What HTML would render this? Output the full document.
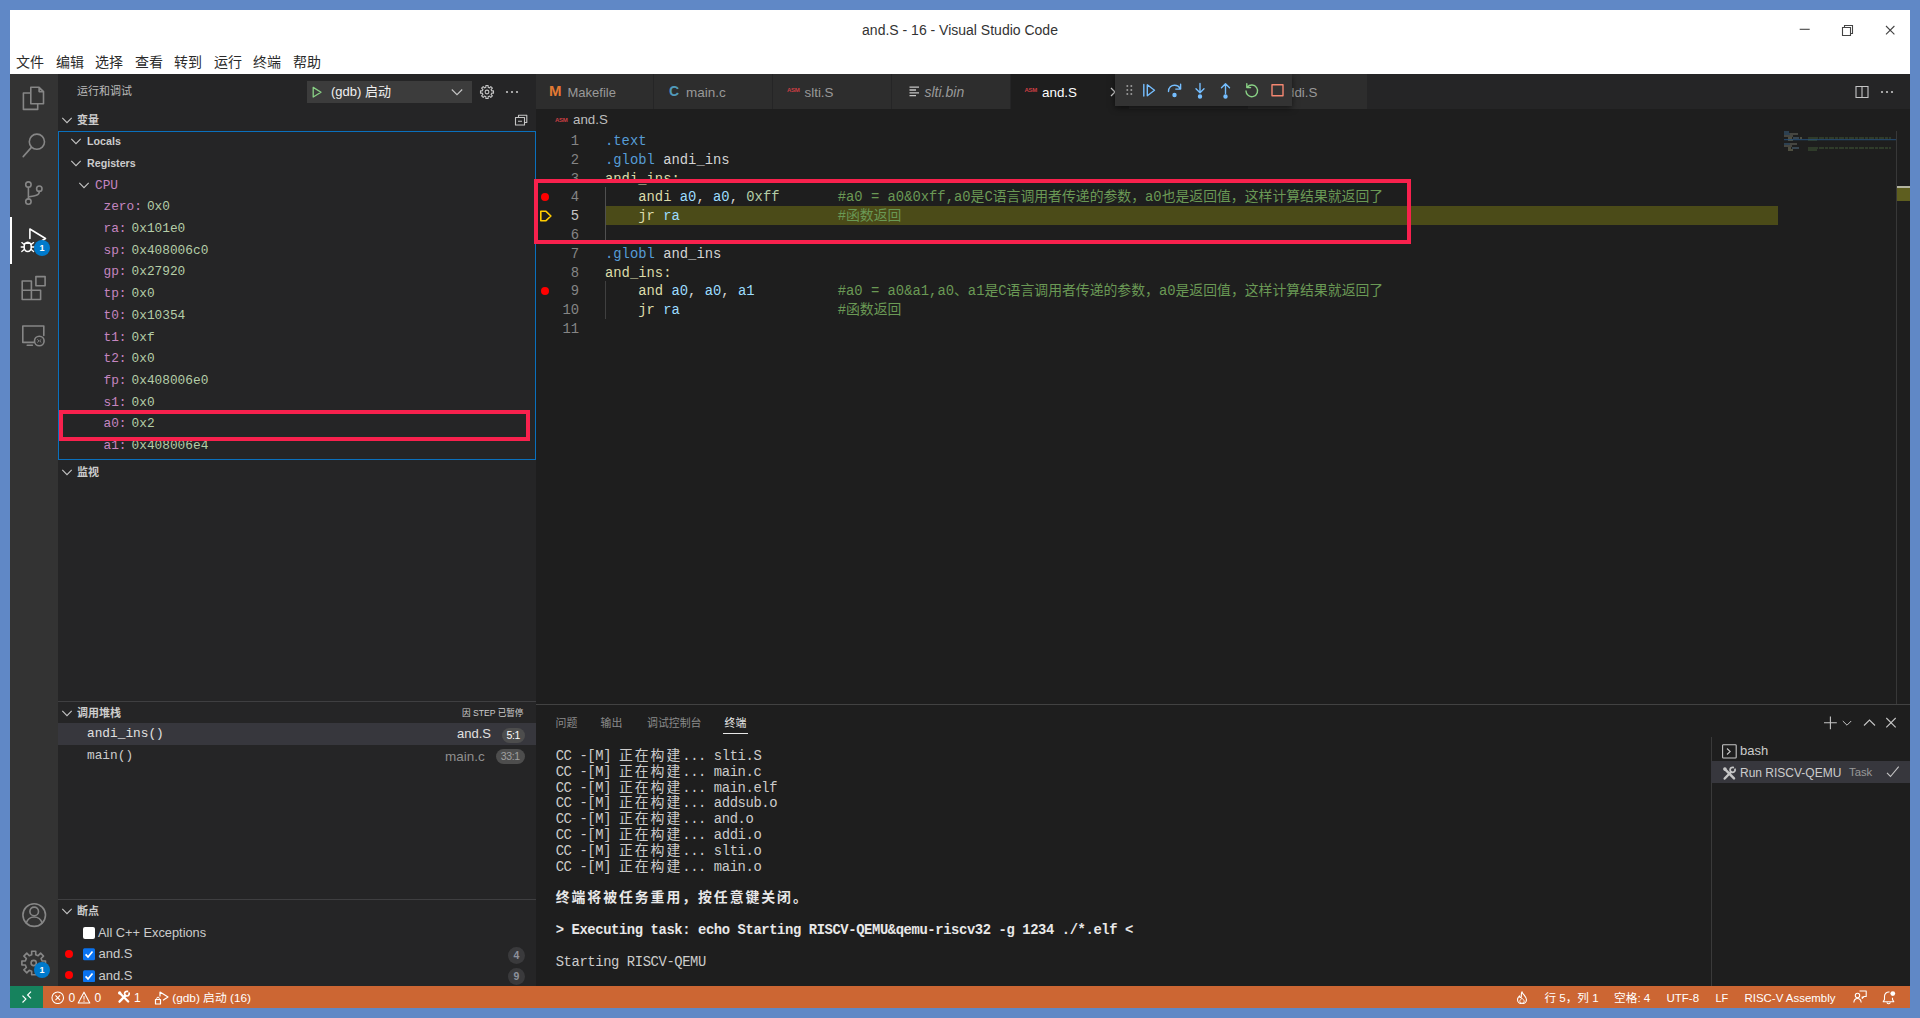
<!DOCTYPE html>
<html lang="zh-CN">
<head>
<meta charset="utf-8">
<title>and.S - 16 - Visual Studio Code</title>
<style>
*{box-sizing:border-box;margin:0;padding:0}
html,body{width:1920px;height:1018px;overflow:hidden;background:#6088c6}
body{position:relative;font-family:"Liberation Sans","Noto Sans CJK SC",sans-serif;font-size:13px;color:#ccc}
.abs{position:absolute}
.mono{font-family:"Liberation Mono","Noto Sans CJK SC",monospace}
#win{position:absolute;left:10px;top:10px;width:1900px;height:998px;background:#1e1e1e;overflow:hidden}
/* coordinates inside #win are target minus 10 */
#titlebar{position:absolute;left:0;top:0;width:1900px;height:64px;background:#fff;color:#333}
#title{position:absolute;left:0;width:1900px;top:10px;height:20px;line-height:20px;text-align:center;font-size:14px;color:#333}
#menu{position:absolute;left:0;top:41px;height:22px;line-height:22px;font-size:14px;color:#2b2b2b;white-space:nowrap}
#menu span{position:absolute;top:0}
#activity{position:absolute;left:0;top:64px;width:47.500px;height:912px;background:#333333}
#sidebar{position:absolute;left:48px;top:64px;width:478px;height:912px;background:#252526}
#editor{position:absolute;left:526px;top:64px;width:1374px;height:630px;background:#1e1e1e}
#panel{position:absolute;left:526px;top:694px;width:1374px;height:282px;background:#1e1e1e;border-top:1px solid #424242}
#status{position:absolute;left:0;top:976px;width:1900px;height:22px;background:#cc6633;color:#fff;font-size:12px;line-height:22px;white-space:nowrap}

/* activity bar */
#activity svg{position:absolute;left:12px;width:24px;height:24px;fill:none;stroke:#868686;stroke-width:1.6;stroke-linejoin:round;stroke-linecap:round}
#activity .badge{position:absolute;width:16px;height:16px;border-radius:8px;background:#007acc;color:#fff;font-size:9px;font-weight:bold;line-height:16px;text-align:center}
/* sidebar */
#sidebar .hdr{position:absolute;left:0;width:478px;height:22px;line-height:22px;font-size:11px;font-weight:bold;color:#ccc}
#sidebar .hdr .t{position:absolute;left:19px;top:0}
#sidebar svg.chev{position:absolute;width:16px;height:16px;fill:none;stroke:#c5c5c5;stroke-width:1.1}
.row{position:absolute;left:0;width:478px;height:22px;line-height:22px;white-space:pre;font-size:12.8px}
.row.mono{margin-top:1px}
.vn{color:#c586c0}.vv{color:#b5cea8}

.pill{height:15px;line-height:15px;border-radius:8px;background:#4d4d4d;color:#fff;font-size:10.500px;text-align:center;letter-spacing:-0.3px}
.dot{width:8.400px;height:8.400px;border-radius:50%;background:#f00}
.cnt{width:17px;height:17px;line-height:17px;border-radius:9px;background:#3a3a3c;color:#8e929c;font-size:10.500px;font-weight:bold;text-align:center}

.tab{position:absolute;top:0;height:35px;background:#2d2d2d}
.tab.on{background:#1e1e1e}
.tl{position:absolute;top:0.700px;height:35px;line-height:35px;font-size:13px;color:#999;white-space:nowrap}
.ti{position:absolute;top:0;height:35px;line-height:34px}
.asm{position:absolute;top:12px;font-size:6px;line-height:8px;font-weight:bold;color:#cc3e44;letter-spacing:-0.300px}
.ln,.cl{position:absolute;height:18.810px;line-height:18.810px;font-family:"Liberation Mono","Noto Sans CJK SC",monospace;font-size:13.850px;white-space:pre}
.ln,.cl{margin-top:1px}
.ln{left:0;width:43px;text-align:right;color:#858585}
.ln.act{color:#c6c6c6}
.cl{left:69px;color:#d4d4d4}
.k{color:#569cd6}.y{color:#dcdcaa}.r{color:#9cdcfe}.n{color:#b5cea8}.c{color:#6a9955}

.pt{position:absolute;top:7px;height:22px;line-height:22px;font-size:10.900px;color:#8b8b8b;white-space:nowrap}
.tl2{position:absolute;left:19.700px;height:16px;line-height:16px;font-family:"Liberation Mono","Noto Sans CJK SC",monospace;font-size:13.850px;letter-spacing:-0.400px;color:#ccc;white-space:pre}
.tl2.b{font-weight:bold;color:#e8e8e8}
.tl2 .cj{letter-spacing:1.970px}
.si{position:absolute;top:1px;height:22px;line-height:22px;font-size:12px;color:#fff;white-space:nowrap}
</style>
</head>
<body>
<div id="win">
  <div id="titlebar">
    <div id="title">and.S - 16 - Visual Studio Code</div>
    <div id="menu"><span style="left:6px">文件</span><span style="left:46px">编辑</span><span style="left:85px">选择</span><span style="left:125px">查看</span><span style="left:164px">转到</span><span style="left:204px">运行</span><span style="left:243px">终端</span><span style="left:283px">帮助</span></div>
    <svg class="abs" style="left:1780px;top:10px;width:110px;height:20px" viewBox="0 0 110 20" fill="none" stroke="#444" stroke-width="1.100">
      <path d="M9.700 9.300h10"/>
      <path d="M52.500 7.500h8v8h-8z M54.500 7.500v-2h8v8h-2"/>
      <path d="M96 6l8.400 8.400M104.400 6l-8.400 8.400"/>
    </svg>
  </div>
  <div id="activity">
    <svg style="left:0;top:0;width:48px;height:912px" viewBox="0 0 48 912">
      <!-- files -->
      <path d="M20.8 13.2h8.3l4.4 4.4v12.2H20.8z M29.1 13.2v4.4h4.4 M20.8 19h-7.4v16.4h14.3v-5.6"/>
      <!-- search -->
      <circle cx="26.9" cy="67.7" r="7.6"/><path d="M21.4 73.4L13.2 82.6"/>
      <!-- scm -->
      <circle cx="18.4" cy="110.6" r="2.7"/><circle cx="18.4" cy="127.6" r="2.7"/><circle cx="29.3" cy="114.7" r="2.7"/>
      <path d="M18.4 113.3V124.9 M29.3 117.4c0 4.2-4.6 4.6-10.9 5.4"/>
      <!-- debug (active) -->
      <g stroke="#fff">
        <path d="M19.9 164.5V155l15.6 9.5-3.2 2"/>
        <ellipse cx="17.7" cy="172.9" rx="3.6" ry="4.6" stroke-width="1.6"/>
        <path d="M14.6 169.4h6.2 M11.8 168.6l2.4 2 M23.6 168.6l-2.4 2 M11.2 173h2.8 M24.2 173h-2.8 M11.8 177.6l2.4-2 M23.6 177.6l-2.4-2" stroke-width="1.3"/>
      </g>
      <!-- extensions -->
      <path d="M12.2 207h9.2v18.5h-9.2z M12.2 216.2h18.4v9.3h-9.2 M30.6 216.2v9.3h-9.2 M25.9 202.6h9.2v9.2h-9.2z"/>
      <!-- remote explorer -->
      <path d="M24 268.4H12.8v-16.4h21v9.4 M17.2 271.2h5.2" /><circle cx="29.3" cy="267" r="4.8"/>
      <path d="M27.6 268.2l1.4-1.3-1.4-1.3 M31 265.6l-1.4 1.3 1.4 1.3" stroke-width="0.9"/>
      <!-- account -->
      <circle cx="24.2" cy="841.1" r="11.3"/><circle cx="24.2" cy="837.4" r="4.3"/><path d="M16.3 849c1.4-4.2 4.6-6 7.9-6s6.5 1.800 7.900 6"/>
      <!-- gear -->
      <path d="M21.69 880.64 L21.64 877.18 L25.76 877.18 L25.71 880.64 L28.19 881.67 L30.60 879.18 L33.52 882.10 L31.03 884.51 L32.06 886.99 L35.52 886.94 L35.52 891.06 L32.06 891.01 L31.03 893.49 L33.52 895.90 L30.60 898.82 L28.19 896.33 L25.71 897.36 L25.76 900.82 L21.64 900.82 L21.69 897.36 L19.21 896.33 L16.80 898.82 L13.88 895.90 L16.37 893.49 L15.34 891.01 L11.88 891.06 L11.88 886.94 L15.34 886.99 L16.37 884.51 L13.88 882.10 L16.80 879.18 L19.21 881.67Z"/>
      <circle cx="23.7" cy="889" r="2.6"/>
    </svg>
    <div class="abs" style="left:0;top:143px;width:2px;height:47px;background:#fff"></div>
    <div class="badge" style="left:24px;top:166px">1</div>
    <div class="badge" style="left:24px;top:888px">1</div>
  </div>
  <div class="abs" style="left:47.500px;top:64px;width:1px;height:912px;background:#252526"></div>
  <div id="sidebar">
    <div class="abs" style="left:19px;top:6px;height:22px;line-height:22px;font-size:11px;color:#bbb">运行和调试</div>
    <div class="abs" style="left:249px;top:7px;width:165px;height:22px;background:#3c3c3c"></div>
    <svg class="abs" style="left:252px;top:10px;width:16px;height:16px" viewBox="0 0 16 16" fill="none" stroke="#89d185" stroke-width="1.3" stroke-linejoin="round"><path d="M3.2 3.400v9.600l7.800-4.800z"/></svg>
    <div class="abs" style="left:273px;top:7px;height:22px;line-height:22px;font-size:13px;color:#f0f0f0">(gdb) 启动</div>
    <svg class="chev" style="left:391px;top:10px" viewBox="0 0 16 16"><path d="M2.800 5.500L8 10.700l5.200-5.200"/></svg>
    <svg class="abs" style="left:421px;top:10px;width:16px;height:16px" viewBox="0 0 16 16" fill="none" stroke="#c5c5c5" stroke-width="1.1" stroke-linejoin="round"><path d="M6.88 3.33 L6.87 1.50 L9.13 1.50 L9.12 3.33 L10.51 3.91 L11.80 2.60 L13.40 4.20 L12.09 5.49 L12.67 6.88 L14.50 6.87 L14.50 9.13 L12.67 9.12 L12.09 10.51 L13.40 11.80 L11.80 13.40 L10.51 12.09 L9.12 12.67 L9.13 14.50 L6.87 14.50 L6.88 12.67 L5.49 12.09 L4.20 13.40 L2.60 11.80 L3.91 10.51 L3.33 9.12 L1.50 9.13 L1.50 6.87 L3.33 6.88 L3.91 5.49 L2.60 4.20 L4.20 2.60 L5.49 3.910Z"/><circle cx="8" cy="8" r="1.900"/></svg>
    <svg class="abs" style="left:446px;top:10px;width:16px;height:16px" viewBox="0 0 16 16" fill="#c5c5c5"><circle cx="3" cy="8" r="1.100"/><circle cx="8" cy="8" r="1.100"/><circle cx="13" cy="8" r="1.100"/></svg>

    <div class="hdr" style="top:35px"><svg class="chev" style="left:1px;top:3px" viewBox="0 0 16 16"><path d="M3.3 5.9L8 10.6l4.700-4.700"/></svg><span class="t">变量</span></div>
    <svg class="abs" style="left:455px;top:38px;width:16px;height:16px" viewBox="0 0 16 16" fill="none" stroke="#c5c5c5" stroke-width="1.100" stroke-linejoin="round"><path d="M5.500 5.500V3.200h8.300v7.300h-2.300 M2.500 5.500h9v7.500h-9z M5 9.300h4"/></svg>
    <div class="abs" style="left:0;top:57px;width:478px;height:329px;border:1px solid #0a70bd"></div>
    <svg class="chev" style="left:10px;top:59.19999999999999px" viewBox="0 0 16 16"><path d="M3.3 5.9L8 10.6l4.700-4.700"/></svg><div class="row" style="top:56.2px;left:29px;font-weight:bold;font-size:10.7px;color:#ccc">Locals</div><svg class="chev" style="left:10px;top:80.9px" viewBox="0 0 16 16"><path d="M3.3 5.9L8 10.6l4.700-4.700"/></svg><div class="row" style="top:77.9px;left:29px;font-weight:bold;font-size:10.7px;color:#ccc">Registers</div><svg class="chev" style="left:18px;top:102.6px" viewBox="0 0 16 16"><path d="M3.3 5.9L8 10.6l4.700-4.700"/></svg><div class="row mono" style="top:99.6px;left:37px;color:#c586c0">CPU</div><div class="row mono" style="top:121.3px;left:45.5px"><span class="vn">zero:</span><span class="vv" style="margin-left:5px">0x0</span></div><div class="row mono" style="top:143.0px;left:45.5px"><span class="vn">ra:</span><span class="vv" style="margin-left:5px">0x101e0</span></div><div class="row mono" style="top:164.7px;left:45.5px"><span class="vn">sp:</span><span class="vv" style="margin-left:5px">0x408006c0</span></div><div class="row mono" style="top:186.4px;left:45.5px"><span class="vn">gp:</span><span class="vv" style="margin-left:5px">0x27920</span></div><div class="row mono" style="top:208.1px;left:45.5px"><span class="vn">tp:</span><span class="vv" style="margin-left:5px">0x0</span></div><div class="row mono" style="top:229.8px;left:45.5px"><span class="vn">t0:</span><span class="vv" style="margin-left:5px">0x10354</span></div><div class="row mono" style="top:251.5px;left:45.5px"><span class="vn">t1:</span><span class="vv" style="margin-left:5px">0xf</span></div><div class="row mono" style="top:273.2px;left:45.5px"><span class="vn">t2:</span><span class="vv" style="margin-left:5px">0x0</span></div><div class="row mono" style="top:294.9px;left:45.5px"><span class="vn">fp:</span><span class="vv" style="margin-left:5px">0x408006e0</span></div><div class="row mono" style="top:316.6px;left:45.5px"><span class="vn">s1:</span><span class="vv" style="margin-left:5px">0x0</span></div><div class="row mono" style="top:338.3px;left:45.5px"><span class="vn">a0:</span><span class="vv" style="margin-left:5px">0x2</span></div><div class="row mono" style="top:360.0px;left:45.5px"><span class="vn">a1:</span><span class="vv" style="margin-left:5px">0x408006e4</span></div>
    <div class="abs" style="left:0.500px;top:336px;width:471.500px;height:31px;border:4.300px solid #f8214d"></div>

    <div class="hdr" style="top:386.500px"><svg class="chev" style="left:1px;top:3px" viewBox="0 0 16 16"><path d="M3.3 5.9L8 10.6l4.700-4.700"/></svg><span class="t">监视</span></div>

    <div class="abs" style="left:0;top:627px;width:478px;height:1px;background:#3f3f41"></div>
    <div class="hdr" style="top:628px"><svg class="chev" style="left:1px;top:3px" viewBox="0 0 16 16"><path d="M3.3 5.9L8 10.6l4.700-4.700"/></svg><span class="t">调用堆栈</span></div>
    <div class="abs" style="left:404px;top:628px;height:22px;line-height:22px;font-size:8.600px;color:#ccc;white-space:nowrap">因 STEP 已暂停</div>
    <div class="abs" style="left:0;top:649px;width:478px;height:22px;background:#37373d"></div>
    <div class="row mono" style="top:648px;left:29px;color:#e0e0e0">andi_ins()</div>
    <div class="row" style="top:649px;left:399px;color:#e0e0e0;font-size:13px;width:auto">and.S</div>
    <div class="abs pill" style="left:444px;top:653.500px;width:22.500px">5:1</div>
    <div class="row mono" style="top:670px;left:29px;color:#ccc">main()</div>
    <div class="row" style="top:671.500px;left:387px;color:#8f8f8f;font-size:13.500px;width:auto">main.c</div>
    <div class="abs pill" style="left:438px;top:675px;width:28.500px;color:#a0a0a0">33:1</div>

    <div class="abs" style="left:0;top:825px;width:478px;height:1px;background:#3f3f41"></div>
    <div class="hdr" style="top:826px"><svg class="chev" style="left:1px;top:3px" viewBox="0 0 16 16"><path d="M3.3 5.9L8 10.6l4.700-4.700"/></svg><span class="t">断点</span></div>
    <div class="abs" style="left:24.500px;top:852.500px;width:12px;height:12px;background:#fff;border-radius:2px"></div>
    <div class="row" style="top:847.500px;left:40px;color:#ccc;font-size:12.800px;width:auto">All C++ Exceptions</div>
    <div class="abs dot" style="left:7px;top:875.500px"></div>
    <svg class="abs" style="left:24.500px;top:874px;width:12px;height:12.500px" viewBox="0 0 12 12"><rect width="12" height="12" rx="1.500" fill="#0a73f0"/><path d="M2.600 6.200l2.400 2.500 4.500-5.500" fill="none" stroke="#fff" stroke-width="1.700"/></svg>
    <div class="row" style="top:869px;left:40.500px;color:#ccc;font-size:13px;width:auto">and.S</div>
    <div class="abs cnt" style="left:450px;top:872.700px">4</div>
    <div class="abs dot" style="left:7px;top:897px"></div>
    <svg class="abs" style="left:24.500px;top:895.500px;width:12px;height:12.500px" viewBox="0 0 12 12"><rect width="12" height="12" rx="1.500" fill="#0a73f0"/><path d="M2.600 6.200l2.400 2.500 4.500-5.500" fill="none" stroke="#fff" stroke-width="1.700"/></svg>
    <div class="row" style="top:890.500px;left:40.500px;color:#ccc;font-size:13px;width:auto">and.S</div>
    <div class="abs cnt" style="left:450px;top:894.200px">9</div>
  </div>
  <div id="editor">
    <div class="abs" style="left:0;top:0;width:1374px;height:35px;background:#252526"></div>
    <div class="tab" style="left:0;width:116.500px"><span class="ti" style="left:13px;color:#e37933;font-weight:bold;font-size:15px">M</span><span class="tl" style="left:31.500px">Makefile</span></div>
    <div class="tab" style="left:117.500px;width:118px"><span class="ti" style="left:15.500px;color:#519aba;font-weight:bold;font-size:14px">C</span><span class="tl" style="left:32.500px;font-size:13.500px">main.c</span></div>
    <div class="tab" style="left:236.500px;width:118px"><span class="asm" style="left:14.500px">ASM</span><span class="tl" style="left:32px;font-size:13.400px">slti.S</span></div>
    <div class="tab" style="left:355.500px;width:118px"><svg class="abs" style="left:17px;top:12px;width:11px;height:11px" viewBox="0 0 11 11" stroke="#c5c5c5" stroke-width="1.300" fill="none"><path d="M0.500 1.200h9.500M0.500 4h6.500M0.500 6.800h9.500M0.500 9.600h6.500"/></svg><span class="tl" style="left:33px;font-style:italic;font-size:14px">slti.bin</span></div>
    <div class="tab on" style="left:474.500px;width:118px"><span class="asm" style="left:14px">ASM</span><span class="tl" style="left:31.500px;color:#fff;font-size:13.400px">and.S</span><svg class="abs" style="left:96px;top:10px;width:16px;height:16px" viewBox="0 0 16 16" stroke="#d0d0d0" stroke-width="1.200" fill="none"><path d="M4 4l8 8M12 4l-8 8"/></svg></div>
    <div class="tab" style="left:712px;width:118.500px"><span class="asm" style="left:14.500px">ASM</span><span class="tl" style="left:31.500px;font-size:13.400px">addi.S</span></div>
    <!-- editor actions -->
    <svg class="abs" style="left:1318px;top:9.500px;width:16px;height:16px" viewBox="0 0 16 16" stroke="#c5c5c5" stroke-width="1.100" fill="none"><path d="M2 2.500h12v11h-12zM8 2.500v11"/></svg>
    <svg class="abs" style="left:1343px;top:9.500px;width:16px;height:16px" viewBox="0 0 16 16" fill="#c5c5c5"><circle cx="3" cy="8" r="1.100"/><circle cx="8" cy="8" r="1.100"/><circle cx="13" cy="8" r="1.100"/></svg>
    <!-- breadcrumb -->
    <span class="asm" style="left:19px;top:41.500px">ASM</span>
    <div class="abs" style="left:37px;top:35px;height:22px;line-height:22px;font-size:13.300px;color:#bdbdbd">and.S</div>
    <!-- code -->
    <div class="abs" style="left:69.500px;top:132.24px;width:1172px;height:18.81px;background:#4b4b18"></div>
    <div class="abs" style="left:69px;top:113.43px;width:1px;height:56.42999999999999px;background:#505050"></div>
    <div class="abs" style="left:69px;top:207.48px;width:1px;height:37.62px;background:#404040"></div>
    <div class="ln" style="top:57.0px">1</div><div class="cl" style="top:57.0px"><span class="k">.text</span></div>
<div class="ln" style="top:75.81px">2</div><div class="cl" style="top:75.81px"><span class="k">.globl</span> andi_ins</div>
<div class="ln" style="top:94.62px">3</div><div class="cl" style="top:94.62px"><span class="y">andi_ins:</span></div>
<div class="ln" style="top:113.43px">4</div><div class="cl" style="top:113.43px">    <span class="y">andi</span> <span class="r">a0</span>, <span class="r">a0</span>, <span class="n">0xff</span>       <span class="c">#a0 = a0&amp;0xff,a0是C语言调用者传递的参数，a0也是返回值，这样计算结果就返回了</span></div>
<div class="ln act" style="top:132.24px">5</div><div class="cl" style="top:132.24px">    <span class="y">jr</span> <span class="r">ra</span>                   <span class="c">#函数返回</span></div>
<div class="ln" style="top:151.05px">6</div><div class="cl" style="top:151.05px"></div>
<div class="ln" style="top:169.86px">7</div><div class="cl" style="top:169.86px"><span class="k">.globl</span> and_ins</div>
<div class="ln" style="top:188.67px">8</div><div class="cl" style="top:188.67px"><span class="y">and_ins:</span></div>
<div class="ln" style="top:207.48px">9</div><div class="cl" style="top:207.48px">    <span class="y">and</span> <span class="r">a0</span>, <span class="r">a0</span>, <span class="r">a1</span>          <span class="c">#a0 = a0&amp;a1,a0、a1是C语言调用者传递的参数，a0是返回值，这样计算结果就返回了</span></div>
<div class="ln" style="top:226.29px">10</div><div class="cl" style="top:226.29px">    <span class="y">jr</span> <span class="r">ra</span>                   <span class="c">#函数返回</span></div>
<div class="ln" style="top:245.1px">11</div><div class="cl" style="top:245.1px"></div>

    <div class="abs dot" style="left:5.100px;top:118.5px"></div>
    <div class="abs dot" style="left:5.100px;top:212.55px"></div>
    <svg class="abs" style="left:2.500px;top:134px;width:16px;height:16px" viewBox="0 0 16 16" fill="none" stroke="#ffcc00" stroke-width="1.600" stroke-linejoin="round"><path d="M1.800 3.300h5.200l4.900 4.700-4.900 4.700h-5.200z"/></svg>
    <!-- annotation rect -->
    <div class="abs" style="left:-1.800px;top:104.800px;width:876.500px;height:65.200px;border:4.800px solid #f8214d"></div>
    <!-- minimap -->
    <svg class="abs" style="left:1242px;top:56px;width:118px;height:30px" viewBox="0 0 118 30">
      <g stroke-width="1" opacity="0.550">
      <path d="M6 2h5M6 4h6" stroke="#569cd6"/><path d="M12 4h8M6 6h9" stroke="#b0b0a0"/>
      <path d="M10 8h4M22 8h2" stroke="#cfcf9f"/><path d="M15 8h6" stroke="#7fb2d6"/><path d="M30 8h10" stroke="#5f8a4d"/><path d="M41 8h72" stroke="#5f8a4d" stroke-dasharray="5 1 3 1"/>
      <path d="M10 10h5" stroke="#cfcf9f"/><path d="M30 10h9" stroke="#5f8a4d"/>
      <path d="M6 14h6" stroke="#569cd6"/><path d="M12 14h7M6 16h8" stroke="#b0b0a0"/>
      <path d="M10 18h3" stroke="#cfcf9f"/><path d="M14 18h7" stroke="#7fb2d6"/><path d="M30 18h10" stroke="#5f8a4d"/><path d="M41 18h72" stroke="#5f8a4d" stroke-dasharray="5 1 3 1"/>
      <path d="M10 20h5" stroke="#cfcf9f"/><path d="M30 20h9" stroke="#5f8a4d"/>
      </g>
      <path d="M6 9.600h112" stroke="#264f78" stroke-width="1.400" opacity="0.800"/>
    </svg>
    <!-- overview ruler -->
    <div class="abs" style="left:1360px;top:57px;width:1px;height:573px;background:#383838"></div>
    <div class="abs" style="left:1361px;top:111.700px;width:13px;height:2.300px;background:#b4b4a0"></div>
    <div class="abs" style="left:1361px;top:114px;width:13px;height:12.800px;background:#5e5e1f"></div>
    <!-- debug toolbar -->
    <div class="abs" style="left:578.500px;top:0;width:177px;height:32px;background:#333333;box-shadow:0 2px 6px rgba(0,0,0,0.550);clip-path:inset(0 -10px -10px -10px)">
      <svg class="abs" style="left:0;top:0;width:177px;height:32px" viewBox="0 0 177 32" fill="none" stroke-width="1.400" stroke-linecap="round" stroke-linejoin="round">
        <g fill="#9a9a9a" stroke="none"><circle cx="12.300" cy="12" r="1"/><circle cx="16.300" cy="12" r="1"/><circle cx="12.300" cy="16" r="1"/><circle cx="16.300" cy="16" r="1"/><circle cx="12.300" cy="20" r="1"/><circle cx="16.300" cy="20" r="1"/></g>
        <g stroke="#75beff"><path d="M28.800 10.500v11.500M32.300 10.800v11l7.200-5.500z"/>
        <path d="M53.500 17.500c0-4 2.900-6.300 6-6.300 2.800 0 4.800 1.500 5.800 3.800M65.600 10.300v4.800h-4.800"/><circle cx="59.500" cy="21" r="1.500" fill="#75beff"/>
        <path d="M85 9.500v9M81 14.800l4 4 4-4"/><circle cx="85" cy="22.500" r="1.500" fill="#75beff"/>
        <path d="M110.500 19.500v-9.500M106.500 13.800l4-4 4 4"/><circle cx="110.500" cy="22.500" r="1.500" fill="#75beff"/></g>
        <g stroke="#89d185"><path d="M132.300 13.200a5.800 5.800 0 1 1-1.300 3.700M131.800 9.800v3.800h3.800"/></g>
        <rect x="157" y="10.800" width="11" height="11" stroke="#f48771"/>
      </svg>
    </div>
  </div>
  <div id="panel">
    <div class="pt" style="left:19.500px">问题</div>
    <div class="pt" style="left:64.500px">输出</div>
    <div class="pt" style="left:111px">调试控制台</div>
    <div class="pt" style="left:188.500px;color:#e7e7e7">终端</div>
    <div class="abs" style="left:186.500px;top:27.500px;width:25.500px;height:1px;background:#e7e7e7"></div>
    <div class="tl2" style="top:43.0px">CC -[M] <span class="cj">正在构建</span>... slti.S</div>
<div class="tl2" style="top:58.83px">CC -[M] <span class="cj">正在构建</span>... main.c</div>
<div class="tl2" style="top:74.66px">CC -[M] <span class="cj">正在构建</span>... main.elf</div>
<div class="tl2" style="top:90.49px">CC -[M] <span class="cj">正在构建</span>... addsub.o</div>
<div class="tl2" style="top:106.32px">CC -[M] <span class="cj">正在构建</span>... and.o</div>
<div class="tl2" style="top:122.15px">CC -[M] <span class="cj">正在构建</span>... addi.o</div>
<div class="tl2" style="top:137.98px">CC -[M] <span class="cj">正在构建</span>... slti.o</div>
<div class="tl2" style="top:153.81px">CC -[M] <span class="cj">正在构建</span>... main.o</div>
<div class="tl2 b" style="top:185.47px"><span class="cj">终端将被任务重用，按任意键关闭。</span></div>
<div class="tl2 b" style="top:217.13px">&gt; Executing task: echo Starting RISCV-QEMU&amp;qemu-riscv32 -g 1234 ./*.elf &lt;</div>
<div class="tl2" style="top:248.79px">Starting RISCV-QEMU</div>

    <svg class="abs" style="left:1282px;top:5px;width:90px;height:26px" viewBox="0 0 90 26" fill="none" stroke="#c5c5c5" stroke-width="1.100">
      <path d="M12.400 6.400v12.800M6 12.800h12.800"/>
      <path d="M24.800 11l4.200 4.200 4.200-4.200" stroke-width="1"/>
      <path d="M46 15.500l5.500-5.500 5.500 5.500"/>
      <path d="M68.300 8l9.400 9.400M77.700 8l-9.400 9.400"/>
    </svg>
    <div class="abs" style="left:1174.500px;top:32px;width:1px;height:250px;background:#3a3a3a"></div>
    <svg class="abs" style="left:1185.500px;top:38.500px;width:15px;height:15px" viewBox="0 0 15 15" fill="none" stroke="#c5c5c5" stroke-width="1.100"><rect x="0.600" y="0.800" width="13.600" height="13.200" rx="0.800"/><path d="M5 4.500l3.200 3-3.200 3"/></svg>
    <div class="abs" style="left:1204px;top:34.700px;height:22px;line-height:22px;font-size:13px;color:#ccc">bash</div>
    <div class="abs" style="left:1175px;top:56px;width:199px;height:22px;background:#37373d"></div>
    <svg class="abs" style="left:1185.500px;top:61px;width:15px;height:15px" viewBox="0 0 15 15" fill="none" stroke="#c5c5c5" stroke-linecap="round"><path d="M2.900 3.200L12 12.300M2.700 12.500L9 6" stroke-width="2.500"/><circle cx="2.900" cy="3.100" r="1" stroke-width="1.600"/><path d="M13.010 3.250A2.500 2.500 0 1 1 11.250 1.490" stroke-width="1.800"/></svg>
    <div class="abs" style="left:1204px;top:56.500px;height:22px;line-height:22px;font-size:12px;color:#ccc;white-space:nowrap">Run RISCV-QEMU</div>
    <div class="abs" style="left:1313px;top:56px;height:22px;line-height:22px;font-size:11.300px;color:#999">Task</div>
    <svg class="abs" style="left:1349px;top:59px;width:16px;height:16px" viewBox="0 0 16 16" fill="none" stroke="#c5c5c5" stroke-width="1.100"><path d="M2 8.800l3.500 3.700 8.200-9.800"/></svg>
  </div>
  <div id="status">
    <div class="abs" style="left:0;top:0;width:33px;height:22px;background:#16825d"></div>
    <svg class="abs" style="left:9px;top:3px;width:16px;height:16px" viewBox="0 0 16 16" fill="none" stroke="#fff" stroke-width="1.200"><path d="M3.500 6.700l3.400 3.400-3.400 3.400M12 2.600l-3.400 3.400 3.400 3.400"/></svg>
    <svg class="abs" style="left:41px;top:4.500px;width:13.500px;height:13.500px" viewBox="0 0 14 14" fill="none" stroke="#fff" stroke-width="1.100"><circle cx="7" cy="7" r="6"/><path d="M4.600 4.600l4.800 4.800M9.400 4.600l-4.800 4.800"/></svg>
    <span class="si" style="left:58.500px">0</span>
    <svg class="abs" style="left:67px;top:4.500px;width:14px;height:13px" viewBox="0 0 14 13" fill="none" stroke="#fff" stroke-width="1.100" stroke-linejoin="round"><path d="M7 1.200l5.800 10.800h-11.600z"/><path d="M7 5v3.600M7 9.600v1.200" stroke-width="1"/></svg>
    <span class="si" style="left:84.500px">0</span>
    <svg class="abs" style="left:106.500px;top:4px;width:14px;height:14px" viewBox="0 0 15 15" fill="none" stroke="#fff" stroke-linecap="round"><path d="M2.900 3.200L12 12.300M2.700 12.500L9 6" stroke-width="2.500"/><circle cx="2.900" cy="3.100" r="1" stroke-width="1.600"/><path d="M13.010 3.250A2.500 2.500 0 1 1 11.250 1.490" stroke-width="1.800"/></svg>
    <span class="si" style="left:124px">1</span>
    <svg class="abs" style="left:144px;top:3.500px;width:15px;height:15px" viewBox="0 0 15 15" fill="none" stroke="#fff" stroke-width="1.200" stroke-linejoin="round"><path d="M6 6.500V2l8 5-5 3.200"/><path d="M1.500 9.500h5v4.500h-5z"/><path d="M2.700 9.500v-1a1.300 1.300 0 0 1 2.600 0v1" stroke-width="1"/></svg>
    <span class="si" style="left:162.300px;font-size:11.800px">(gdb) 启动 (16)</span>
    <svg class="abs" style="left:1506px;top:4.500px;width:12px;height:13px" viewBox="0 0 12 13" fill="none" stroke="#fff" stroke-width="1.100" stroke-linejoin="round"><path d="M6 0.800c0.500 2.500 4.500 4.500 4.500 8a4.500 4 0 0 1-9 0c0-1.800 1-3 2-4 0 1.500 0.800 2 1.500 2 0.800-2-0.300-4 1-6z"/><path d="M6 12.200c-1.500 0-2.200-1-2.200-2 0-1 1-1.800 2.200-3 1 1.200 2.200 2 2.200 3s-0.700 2-2.200 2z" stroke-width="0.900"/></svg>
    <span class="si" style="left:1534.500px;font-size:11.600px">行 5，列 1</span>
    <span class="si" style="left:1604px;font-size:11.700px">空格: 4</span>
    <span class="si" style="left:1656.500px;font-size:11.500px">UTF-8</span>
    <span class="si" style="left:1705.500px;font-size:11px">LF</span>
    <span class="si" style="left:1734.500px;font-size:11.450px">RISC-V Assembly</span>
    <svg class="abs" style="left:1842.500px;top:4px;width:14px;height:14px" viewBox="0 0 14 14" fill="none" stroke="#fff" stroke-width="1.100" stroke-linejoin="round"><circle cx="4.500" cy="5.500" r="2.200"/><path d="M0.800 12.500c0.300-2.800 1.800-4 3.700-4s3.400 1.200 3.700 4"/><path d="M6.500 1h6.700v5.500h-2.200l-1.800 1.800v-1.800"/></svg>
    <svg class="abs" style="left:1872px;top:3.500px;width:14px;height:15px" viewBox="0 0 14 15" fill="none" stroke="#fff" stroke-width="1.100" stroke-linejoin="round"><path d="M7.500 2a4.300 4.300 0 0 0-5 4.300v3.200l-1.300 2.300h10.600l-1.300-2.300v-1.800"/><path d="M5 12.200a1.600 1.600 0 0 0 3.200 0"/><circle cx="10.800" cy="3.600" r="2.400" fill="#fff" stroke="none"/></svg>
  </div>
</div>
</body>
</html>
